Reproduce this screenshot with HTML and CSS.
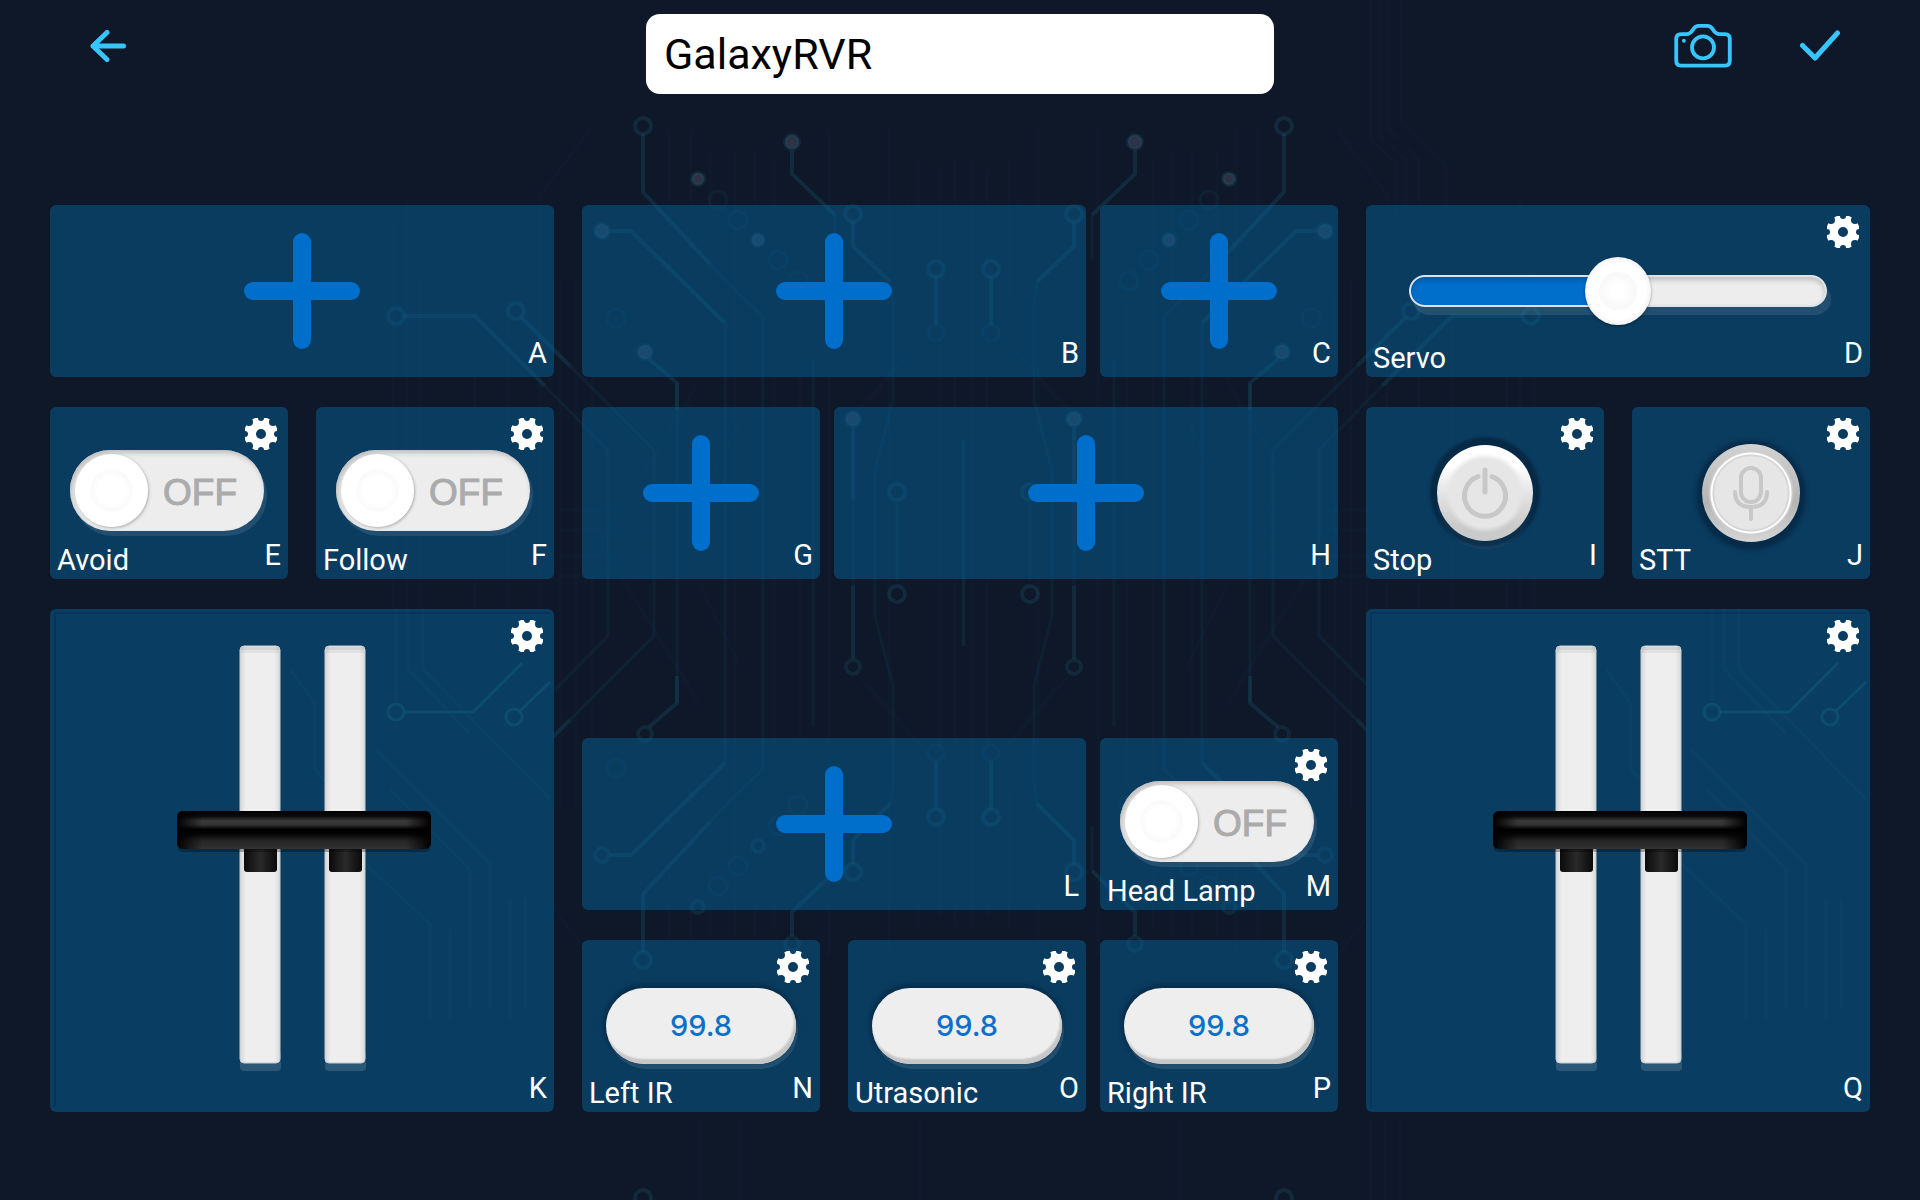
FILE: index.html
```html
<!DOCTYPE html>
<html lang="en">
<head>
<meta charset="utf-8">
<meta name="viewport" content="width=device-width, initial-scale=1">
<title>GalaxyRVR</title>
<link rel="stylesheet" href="styles.css">
</head>
<body>
<svg class="circuit" viewBox="0 0 1920 1200" preserveAspectRatio="xMidYMin slice" aria-hidden="true">
  <defs>
    <g id="quarter">
      <g class="haze">
        <path d="M393 220V543M407 200V543M540 543V195L590 130M420 280V543M475 290V543M508 300V543M560 280V543M576 280V543M592 290V543M669 130V330M691 130V300M710 150V280M735 150V543M755 150V300M774 160V543M800 300V543M829 130V543M889 130V543M918 160V300M940 170V543M955 160V543M1018 200V300"/>
        <path d="M560 510H660M560 530H680M600 543L700 380M690 400L640 480M740 420L700 500M870 400L930 330M850 420L910 350"/>
      </g>
      <g class="trace soft">
        <path d="M710 264L728 283L763 317V543M835 215V260M725 323V543M890 282L893 300V400L875 470M813 360V543M963 440V543M608 450V543M654 450V543M677 383V543M897 505V543M853 500V543M875 470V543"/>
        <circle cx="718" cy="200" r="9"/><circle cx="738" cy="220" r="9"/><circle cx="778" cy="260" r="9"/><circle cx="798" cy="281" r="9"/>
        <circle cx="616" cy="318" r="9"/><circle cx="936" cy="333" r="8"/>
      </g>
      <g class="trace">
        <path d="M643 134V192L710 264M792 150V174L835 215M853 222V246L890 282M936 277V325M610 231H631L725 323M404 316H475L545 386M522 318L570 366M649 359L677 383V410M853 427V500"/>
        <circle cx="643" cy="126" r="8"/><circle cx="853" cy="214" r="8"/><circle cx="936" cy="269" r="8"/>
        <circle cx="396" cy="316" r="8"/><circle cx="516" cy="311" r="8"/><circle cx="897" cy="492" r="8"/>
      </g>
      <path class="trace soft" d="M545 386L608 450M570 366L654 450"/>
    </g>
    <g id="nodes">
      <circle cx="792" cy="142" r="7"/><circle cx="698" cy="179" r="6"/><circle cx="758" cy="240" r="6"/>
      <circle cx="602" cy="231" r="7"/><circle cx="645" cy="352" r="7"/><circle cx="853" cy="419" r="7"/>
    </g>
  </defs>
  <use href="#quarter"/>
  <use href="#quarter" transform="matrix(-1 0 0 1 1927 0)"/>
  <use href="#quarter" transform="matrix(1 0 0 -1 0 1086)"/>
  <use href="#quarter" transform="matrix(-1 0 0 -1 1927 1086)"/>
  <use href="#nodes" class="node"/>
  <use href="#nodes" class="node" transform="matrix(-1 0 0 1 1927 0)"/>
  <use href="#nodes" class="ring" transform="matrix(1 0 0 -1 0 1086)"/>
  <use href="#nodes" class="ring" transform="matrix(-1 0 0 -1 1927 1086)"/>
  <g class="haze"><path d="M1371 0V140L1396 163V220M1380 0V136L1406 160V220M1388 0V128L1419 160V240M1401 0V120L1446 165V250M1371 1120V1200M1385 1120V1200M1400 1120V1200M700 1120V1200M740 1120V1200M920 1120V1200M1180 1120V1200"/></g>
  <g class="trace"><circle cx="643" cy="1198" r="8"/><circle cx="1284" cy="1198" r="8"/></g>
</svg>

<svg class="sprite" aria-hidden="true">
  <defs>
    <mask id="gear-cut">
      <rect width="32" height="32" fill="#fff"/>
      <circle cx="16" cy="16" r="5" fill="#000"/>
      <g fill="#000">
        <circle cx="16" cy="0" r="3"/><circle cx="16" cy="32" r="3"/><circle cx="0" cy="16" r="3"/><circle cx="32" cy="16" r="3"/>
        <circle cx="4" cy="4" r="4"/><circle cx="28" cy="4" r="4"/><circle cx="4" cy="28" r="4"/><circle cx="28" cy="28" r="4"/>
      </g>
    </mask>
    <linearGradient id="handle-fill" x1="0" y1="0" x2="0" y2="1">
      <stop offset="0" stop-color="#000"/><stop offset=".14" stop-color="#0c0c0c"/><stop offset=".26" stop-color="#3a3a3a"/>
      <stop offset=".36" stop-color="#343434"/><stop offset=".48" stop-color="#000"/><stop offset=".6" stop-color="#040404"/>
      <stop offset=".78" stop-color="#252525"/><stop offset="1" stop-color="#333"/>
    </linearGradient>
    <linearGradient id="handle-ends">
      <stop offset="0" stop-color="#000"/><stop offset=".1" stop-color="#000" stop-opacity="0"/>
      <stop offset=".9" stop-color="#000" stop-opacity="0"/><stop offset="1" stop-color="#000"/>
    </linearGradient>
    <linearGradient id="stub-fill">
      <stop offset="0" stop-color="#0a0a0a"/><stop offset=".5" stop-color="#2a2a2a"/><stop offset="1" stop-color="#0a0a0a"/>
    </linearGradient>
    <linearGradient id="rail-fill">
      <stop offset="0" stop-color="#d6d6d6"/><stop offset=".14" stop-color="#eee"/><stop offset=".86" stop-color="#eee"/><stop offset="1" stop-color="#dadada"/>
    </linearGradient>
  </defs>
  <symbol id="gear" viewBox="0 0 32 32"><circle cx="16" cy="16" r="17" fill="#fff" mask="url(#gear-cut)"/></symbol>
  <symbol id="plus" viewBox="0 0 116 116">
    <rect x="49" y="0" width="18" height="116" rx="9"/><rect x="0" y="49" width="116" height="18" rx="9"/>
  </symbol>
  <symbol id="throttle" viewBox="0 0 270 440">
    <g fill="#fff" fill-opacity=".14"><rect x="73" y="410" width="41" height="20" rx="4"/><rect x="158" y="410" width="41" height="20" rx="4"/></g>
    <g fill="url(#rail-fill)" stroke="#c4ccd2" stroke-width="1"><rect x="73" y="5" width="40" height="417" rx="4"/><rect x="158" y="5" width="40" height="417" rx="4"/></g>
    <g fill="#000" fill-opacity=".05"><rect x="74" y="6" width="38" height="3"/><rect x="159" y="6" width="38" height="3"/><rect x="74" y="6" width="38" height="6"/><rect x="159" y="6" width="38" height="6"/></g>
    <g fill="url(#stub-fill)"><rect x="77" y="204" width="33" height="27" rx="3"/><rect x="162" y="204" width="33" height="27" rx="3"/></g>
    <rect x="10" y="173" width="254" height="38" rx="6" fill="#000" fill-opacity=".3"/>
    <rect x="10" y="170" width="254" height="38" rx="6" fill="url(#handle-fill)"/>
    <rect x="10" y="170" width="254" height="38" rx="6" fill="url(#handle-ends)"/>
  </symbol>
  <symbol id="card-trace" viewBox="0 0 504 503">
    <path d="M354 103H423L472 54M470 102L500 73"/>
    <circle cx="346" cy="103" r="8"/><circle cx="464" cy="108" r="8"/>
    <path d="M346 0V92M358 0V60L420 125M373 0V60L500 190M325 140L440 255V400M340 180L420 260V400M310 250L380 315V410M400 320V410M240 60L265 95V160L290 190M460 290V410M475 290V400" stroke-opacity=".12"/>
    <path d="M5 498V4H500" stroke="#06304f" stroke-opacity=".6" stroke-width="2"/>
  </symbol>
</svg>

<header class="topbar">
  <button class="icon-button back" type="button" aria-label="Back">
    <svg width="36" height="32" viewBox="0 0 36 32"><path d="M33.500 16H3M17 2.500L3 16L17 29.500"/></svg>
  </button>
  <input class="title" type="text" value="GalaxyRVR" aria-label="Controller name">
  <div class="actions">
    <button class="icon-button" type="button" aria-label="Cover photo">
      <svg width="58" height="44" viewBox="0 0 60 46"><g class="thin"><path d="M7 10.500H13Q16 10.500 18 8L20.500 4.500Q22.500 2 25.500 2H34.500Q37.500 2 39.500 4.500L42 8Q44 10.500 47 10.500H53Q58 10.500 58 15.500V38.500Q58 43.500 53 43.500H7Q2 43.500 2 38.500V15.500Q2 10.500 7 10.500Z"/><circle cx="30" cy="24.500" r="11.500"/></g><circle class="dot" cx="10" cy="17.500" r="2"/></svg>
    </button>
    <button class="icon-button" type="button" aria-label="Save">
      <svg width="40" height="32" viewBox="0 0 40 32"><path d="M2.500 15.500L15 28L37.500 3"/></svg>
    </button>
  </div>
</header>

<main class="board">
  <section class="column">
    <article class="card"><button class="add" type="button" aria-label="Add widget A"><svg><use href="#plus"/></svg></button><span class="slot">A</span></article>
    <div class="pair">
      <article class="card">
        <label class="switch"><input id="avoid" type="checkbox"><span class="knob"></span><span class="state">OFF</span></label>
        <button class="gear" type="button" aria-label="Avoid settings"><svg><use href="#gear"/></svg></button>
        <label class="name" for="avoid">Avoid</label><span class="slot">E</span>
      </article>
      <article class="card">
        <label class="switch"><input id="follow" type="checkbox"><span class="knob"></span><span class="state">OFF</span></label>
        <button class="gear" type="button" aria-label="Follow settings"><svg><use href="#gear"/></svg></button>
        <label class="name" for="follow">Follow</label><span class="slot">F</span>
      </article>
    </div>
    <article class="card tall">
      <svg class="card-trace"><use href="#card-trace"/></svg>
      <div class="throttle"><svg><use href="#throttle"/></svg><input type="range" value="54" aria-label="Throttle K"></div>
      <button class="gear" type="button" aria-label="Throttle K settings"><svg><use href="#gear"/></svg></button>
      <span class="slot">K</span>
    </article>
  </section>

  <section class="column">
    <div class="row">
      <article class="card wide"><button class="add" type="button" aria-label="Add widget B"><svg><use href="#plus"/></svg></button><span class="slot">B</span></article>
      <article class="card narrow"><button class="add" type="button" aria-label="Add widget C"><svg><use href="#plus"/></svg></button><span class="slot">C</span></article>
    </div>
    <div class="row">
      <article class="card narrow"><button class="add" type="button" aria-label="Add widget G"><svg><use href="#plus"/></svg></button><span class="slot">G</span></article>
      <article class="card wide"><button class="add" type="button" aria-label="Add widget H"><svg><use href="#plus"/></svg></button><span class="slot">H</span></article>
    </div>
    <div class="row lower">
      <article class="card wide"><button class="add" type="button" aria-label="Add widget L"><svg><use href="#plus"/></svg></button><span class="slot">L</span></article>
      <article class="card narrow">
        <label class="switch"><input id="lamp" type="checkbox"><span class="knob"></span><span class="state">OFF</span></label>
        <button class="gear" type="button" aria-label="Head Lamp settings"><svg><use href="#gear"/></svg></button>
        <label class="name" for="lamp">Head Lamp</label><span class="slot">M</span>
      </article>
    </div>
    <div class="row">
      <div class="pair wide">
        <article class="card">
          <output class="reading" id="left-ir">99.8</output>
          <button class="gear" type="button" aria-label="Left IR settings"><svg><use href="#gear"/></svg></button>
          <label class="name" for="left-ir">Left IR</label><span class="slot">N</span>
        </article>
        <article class="card">
          <output class="reading" id="ultrasonic">99.8</output>
          <button class="gear" type="button" aria-label="Utrasonic settings"><svg><use href="#gear"/></svg></button>
          <label class="name" for="ultrasonic">Utrasonic</label><span class="slot">O</span>
        </article>
      </div>
      <article class="card narrow">
        <output class="reading" id="right-ir">99.8</output>
        <button class="gear" type="button" aria-label="Right IR settings"><svg><use href="#gear"/></svg></button>
        <label class="name" for="right-ir">Right IR</label><span class="slot">P</span>
      </article>
    </div>
  </section>

  <section class="column">
    <article class="card">
      <input class="slider" id="servo" type="range" value="50">
      <button class="gear" type="button" aria-label="Servo settings"><svg><use href="#gear"/></svg></button>
      <label class="name" for="servo">Servo</label><span class="slot">D</span>
    </article>
    <div class="pair">
      <article class="card">
        <button class="push power" id="stop" type="button">
          <svg width="48" height="52" viewBox="0 0 48 52"><path d="M17 9.500A20.500 20.500 0 1 0 31 9.500M24 3V25"/></svg>
        </button>
        <button class="gear" type="button" aria-label="Stop settings"><svg><use href="#gear"/></svg></button>
        <label class="name" for="stop">Stop</label><span class="slot">I</span>
      </article>
      <article class="card">
        <button class="push voice" id="stt" type="button">
          <svg width="38" height="56" viewBox="0 0 38 56"><rect x="9" y="3" width="20" height="34" rx="10"/><path d="M3 27Q3 42 19 42Q35 42 35 27M19 42V54"/></svg>
        </button>
        <button class="gear" type="button" aria-label="STT settings"><svg><use href="#gear"/></svg></button>
        <label class="name" for="stt">STT</label><span class="slot">J</span>
      </article>
    </div>
    <article class="card tall">
      <svg class="card-trace"><use href="#card-trace"/></svg>
      <div class="throttle"><svg><use href="#throttle"/></svg><input type="range" value="54" aria-label="Throttle Q"></div>
      <button class="gear" type="button" aria-label="Throttle Q settings"><svg><use href="#gear"/></svg></button>
      <span class="slot">Q</span>
    </article>
  </section>
</main>
</body>
</html>
```
FILE: styles.css
```css
* { box-sizing: border-box; }

body {
  position: relative;
  margin: 0;
  min-height: 100vh;
  overflow-x: hidden;
  background: #0e1829;
  color: #fff;
  font-family: Roboto, "Liberation Sans", sans-serif;
  font-size: 29px;
  line-height: 28px;
}

button {
  padding: 0;
  border: 0;
  background: none;
  color: inherit;
  font: inherit;
  cursor: pointer;
}

svg { display: block; }
.sprite { position: absolute; width: 0; height: 0; }

/* Circuit board behind the page */
.circuit {
  position: absolute;
  inset: 0;
  z-index: -1;
  width: 100%;
  height: 100%;
}
.trace { fill: none; stroke: #1d6a7c; stroke-opacity: .24; stroke-width: 4; }
.trace.soft, .soft { stroke: #14607c; stroke-opacity: .13; stroke-width: 3; }
.haze { fill: none; stroke: #2a6a80; stroke-opacity: .04; stroke-width: 3; }
.node { fill: #5d5a72; fill-opacity: .4; stroke: #1d5a70; stroke-opacity: .25; stroke-width: 4; }
.ring { fill: none; stroke: #1d6a7c; stroke-opacity: .2; stroke-width: 4; }

/* Top bar */
.topbar {
  display: grid;
  grid-template-columns: 1fr minmax(0, 628px) 1fr;
  align-items: start;
  padding: 14px 80px 0;
  min-height: 205px;
}
.icon-button svg {
  fill: none;
  stroke: #36c6fb;
  stroke-width: 5;
  stroke-linecap: round;
  stroke-linejoin: round;
}
.icon-button .thin { stroke-width: 4; }
.icon-button .dot { fill: #36c6fb; stroke: none; }
.back { justify-self: start; margin: 16px 0 0 10px; }
.title {
  width: 100%;
  height: 80px;
  padding: 0 18px;
  border: 0;
  border-radius: 14px;
  background: #fff;
  color: #000;
  font: 43px/48px Roboto, "Liberation Sans", sans-serif;
}
.actions {
  display: flex;
  justify-content: flex-end;
  align-items: center;
  gap: 68px;
  margin-top: 10px;
}

/* Board */
.board {
  display: grid;
  grid-template-columns: 2fr 3fr 2fr;
  gap: 28px;
  padding: 0 50px 88px;
}
.column { display: flex; flex-direction: column; gap: 30px; min-width: 0; }
.pair { display: grid; grid-template-columns: 1fr 1fr; gap: 28px; }
.row { display: flex; gap: 14px; }
.wide { flex: 36 1 0; }
.narrow { flex: 17 1 0; }
.lower { margin-top: auto; }

/* Every part of a card shares one cell and aligns itself in it */
.card {
  display: grid;
  grid-template: minmax(0, 1fr) / minmax(0, 1fr);
  min-height: 172px;
  border-radius: 6px;
  overflow: hidden;
  background: rgba(6, 96, 151, .5);
}
.card > * { grid-area: 1 / 1; place-self: center; }
.card.tall { min-height: 503px; background: #0a3d62; }
.card > .card-trace {
  place-self: stretch;
  width: 100%;
  height: 100%;
  fill: none;
  stroke: #10607f;
  stroke-opacity: .45;
  stroke-width: 3;
}
.card > .gear { place-self: start end; margin: 11px 11px 0 0; }
.gear svg { width: 32px; height: 32px; }
.card > .name { place-self: end start; margin: 0 0 5px 7px; }
.card > .slot { place-self: end; margin: 0 7px 10px 0; }
.card > .add { place-self: stretch; display: grid; place-items: center; }
.add svg { width: 116px; height: 116px; fill: #006ecb; }

/* Toggle */
.switch {
  display: flex;
  align-items: center;
  width: 194px;
  height: 81px;
  margin: 0 4px 5px 0;
  padding: 4px 5px;
  border-radius: 41px;
  background: #ededed;
  box-shadow: inset 2px 3px 5px #bdbdbd, 3px 5px 0 rgba(255, 255, 255, .1);
}
.switch input { position: absolute; opacity: 0; width: 0; height: 0; margin: 0; }
.knob {
  width: 73px;
  height: 73px;
  border-radius: 50%;
  background: radial-gradient(circle, #fff 0 14px, #fafafa 20px, #fff 22px);
  box-shadow: 1px 1px 3px #aaa;
}
.state {
  margin: 4px 0 0 15px;
  color: #ababab;
  font: 37px/40px "Liberation Sans", sans-serif;
  -webkit-text-stroke: 1px #ababab;
}

/* Sensor reading */
.reading {
  display: grid;
  place-items: center;
  width: 190px;
  height: 76px;
  border-radius: 38px;
  background: #eee;
  box-shadow: inset -2px -5px 2px #c6c6c6, 2px 5px 0 rgba(255, 255, 255, .1), -1px -2px 4px 2px rgba(0, 20, 40, .35);
  color: #0a70ca;
  font: 500 29px/32px Inter, "Liberation Sans", sans-serif;
}

/* Servo slider */
.slider {
  appearance: none;
  width: 83%;
  height: 32px;
  margin: 0;
  border: 2px solid #dfe3e6;
  border-radius: 16px;
  background: linear-gradient(90deg, #006ecb 50%, #ededed 50%);
  box-shadow: inset 0 3px 5px rgba(0, 0, 0, .2), 4px 8px 0 rgba(255, 255, 255, .1);
}
.slider::-webkit-slider-thumb {
  appearance: none;
  width: 66px;
  height: 68px;
  border-radius: 50%;
  background: radial-gradient(circle, #fff 0 6px, #f8f8f8 18px, #fff 20px 28px, #f4f4f4 33px);
  box-shadow: 0 1px 3px rgba(0, 0, 0, .4);
}

/* Push buttons */
.push {
  display: grid;
  place-items: center;
  width: 96px;
  height: 96px;
  border-radius: 50%;
}
.push svg { fill: none; stroke: #c8c8c8; stroke-linecap: round; }
.power {
  background: radial-gradient(circle, #e6e6e6 0 34px, transparent 40px), linear-gradient(#fff 22%, #e4e4e4 50%, #cacaca 85%);
  box-shadow: 0 -1px 3px 7px rgba(3, 30, 52, .6), 0 8px 2px rgba(255, 255, 255, .08);
}
.power svg { stroke-width: 5; }
.voice {
  width: 98px;
  height: 98px;
  background: radial-gradient(circle, #e6e6e6 0 36px, #d2d2d2 38px, #fff 39px 40px, #cfcfcf 41px, transparent 43px), linear-gradient(#d2d2d2, #b4b4b4 60%, #d6d6d6);
  box-shadow: 0 2px 4px 6px rgba(3, 30, 52, .55);
}
.voice svg { stroke-width: 4; }

/* Throttle: the range input lies over its drawing */
.throttle { position: relative; width: 270px; height: 440px; }
.throttle svg { width: 100%; height: 100%; }
.throttle input {
  position: absolute;
  inset: 0;
  width: 100%;
  height: 100%;
  margin: 0;
  opacity: 0;
  writing-mode: vertical-lr;
  direction: rtl;
}
```
